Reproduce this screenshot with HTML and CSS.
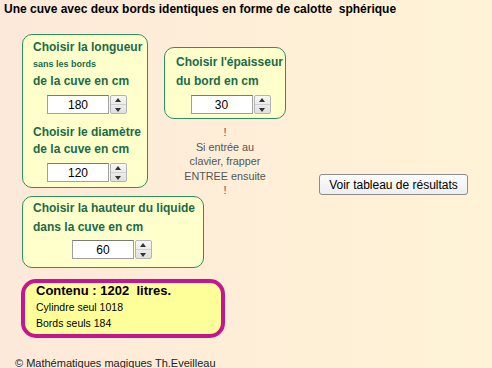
FILE: index.html
```html
<!DOCTYPE html>
<html>
<head>
    <title>Cuve avec bords en calotte sphérique</title>
    <link rel="stylesheet" href="styles.css">
</head>
<body>
    <h1 class="title">Une cuve avec deux bords identiques en forme de calotte &nbsp;sphérique</h1>

    <div class="top-row">
        <div class="panel panel-long">
            <div class="label">Choisir la longueur</div>
            <div class="label small">sans les bords</div>
            <div class="label">de la cuve en cm</div>
            <div class="spin">
                <input type="text" class="spin-field" value="180">
                <span class="spin-btns"><span class="up"></span><span class="down"></span></span>
            </div>

            <div class="label first">Choisir le diamètre</div>
            <div class="label">de la cuve en cm</div>
            <div class="spin">
                <input type="text" class="spin-field" value="120">
                <span class="spin-btns"><span class="up"></span><span class="down"></span></span>
            </div>
        </div>

        <div class="side">
            <div class="panel panel-bord">
                <div class="label">Choisir l'épaisseur</div>
                <div class="label">du bord en cm</div>
                <div class="spin">
                    <input type="text" class="spin-field" value="30">
                    <span class="spin-btns"><span class="up"></span><span class="down"></span></span>
                </div>
            </div>
            <div class="note">
                !<br>
                Si entrée au<br>
                clavier, frapper<br>
                ENTREE ensuite<br>
                !
            </div>
        </div>

        <button type="button" class="btn-table">Voir tableau de résultats</button>
    </div>

    <div class="panel panel-hauteur">
        <div class="label">Choisir la hauteur du liquide</div>
        <div class="label">dans la cuve en cm</div>
        <div class="spin">
            <input type="text" class="spin-field" value="60">
            <span class="spin-btns"><span class="up"></span><span class="down"></span></span>
        </div>
    </div>

    <div class="result">
        <div class="result-main">Contenu : 1202 &nbsp;litres.</div>
        <div class="result-line">Cylindre seul 1018</div>
        <div class="result-line">Bords seuls 184</div>
    </div>

    <div class="footer">© Mathématiques magiques Th.Eveilleau</div>
</body>
</html>
```

FILE: styles.css
```css
html {
    height: 100%;
}

body {
    font-family: "Liberation Sans", Arial, sans-serif;
    background: linear-gradient(to right, #fde9d9, #fff3d6); /* peach to cream */
    color: #000000;
    margin: 0;
    padding: 1px 0 0 4px;
    min-height: 100%;
    box-sizing: border-box;
}

.title {
    font-size: 12px;
    font-weight: bold;
    line-height: 16px;
    margin: 0;
}

.top-row {
    display: flex;
    align-items: flex-start;
    margin-top: 17px;
    padding-left: 18px;
}

.panel {
    background-color: #ffffcc; /* pale yellow boxes */
    border: 1px solid #2f8f5f;
    border-radius: 10px;
    box-sizing: border-box;
    color: #196b48; /* dark green labels */
}

.label {
    font-size: 12px;
    font-weight: bold;
    line-height: 19px;
    white-space: nowrap;
}

.label.small {
    font-size: 9px;
}

.panel-long {
    width: 126px;
    padding: 4px 0 5px 10px;
}

.panel-long .label {
    line-height: 17px;
}

.panel-long .label.first {
    margin-top: 10px;
}

.side {
    margin-left: 16px;
    margin-top: 13px;
    margin-bottom: -20px;
    width: 122px;
}

.panel-bord {
    padding: 5px 0 4px 11px;
}

.note {
    margin-top: 6px;
    font-size: 10.8px;
    line-height: 14.5px;
    color: #555555;
    text-align: center;
}

.btn-table {
    margin-left: 33px;
    margin-top: 140px;
    margin-bottom: -30px;
    width: 149px;
    height: 21px;
    padding: 0;
    font-family: "Liberation Sans", Arial, sans-serif;
    font-size: 12px;
    color: #000000;
    background: linear-gradient(#fbfcfd, #eceef0);
    border: 1px solid #8c8c8c;
    border-radius: 3px;
}

.spin {
    display: flex;
    width: 80px;
    height: 19px;
    margin: 4px auto 0;
}

.panel-long .spin {
    margin: 5px 0 0 14px;
}

.spin-field {
    width: 62px;
    height: 19px;
    box-sizing: border-box;
    padding: 0;
    border: 1px solid #a0a0a0;
    border-top-color: #7a7a7a;
    background: #ffffff;
    font-family: "Liberation Sans", Arial, sans-serif;
    font-size: 12px;
    color: #000000;
    text-align: center;
}

.spin-btns {
    display: flex;
    flex-direction: column;
    width: 17px;
    margin-left: 1px;
    border: 1px solid #b4b4b4;
    border-radius: 2px;
    box-sizing: border-box;
    background: linear-gradient(#f7f7f7, #e0e0e0);
}

.spin-btns span {
    flex: 1;
    position: relative;
}

.spin-btns .up {
    border-bottom: 1px solid #d0d0d0;
}

.spin-btns .up::after,
.spin-btns .down::after {
    content: "";
    position: absolute;
    left: 4px;
    border-left: 3.5px solid transparent;
    border-right: 3.5px solid transparent;
}

.spin-btns .up::after {
    top: 2px;
    border-bottom: 4px solid #333333;
}

.spin-btns .down::after {
    top: 3px;
    border-top: 4px solid #333333;
}

.panel-hauteur {
    width: 182px;
    margin: 8px 0 0 18px;
    padding: 2px 0 8px 10px;
}

.panel-hauteur .spin {
    margin: 3px 0 0 39px;
}

.result {
    width: 204px;
    height: 59px;
    margin: 11px 0 0 17px;
    padding: 0 0 0 11px;
    box-sizing: border-box;
    background-color: #ffff99;
    border: 4px solid #c4168e; /* magenta frame */
    border-radius: 15px;
}

.result-main {
    font-size: 13px;
    font-weight: bold;
    line-height: 15px;
}

.result-line {
    font-size: 10.5px;
    line-height: 16px;
}

.result-main + .result-line {
    margin-top: 1px;
}

.footer {
    margin-top: 18px;
    padding-left: 11px;
    font-size: 11px;
    line-height: 14px;
    color: #222222;
}
```
